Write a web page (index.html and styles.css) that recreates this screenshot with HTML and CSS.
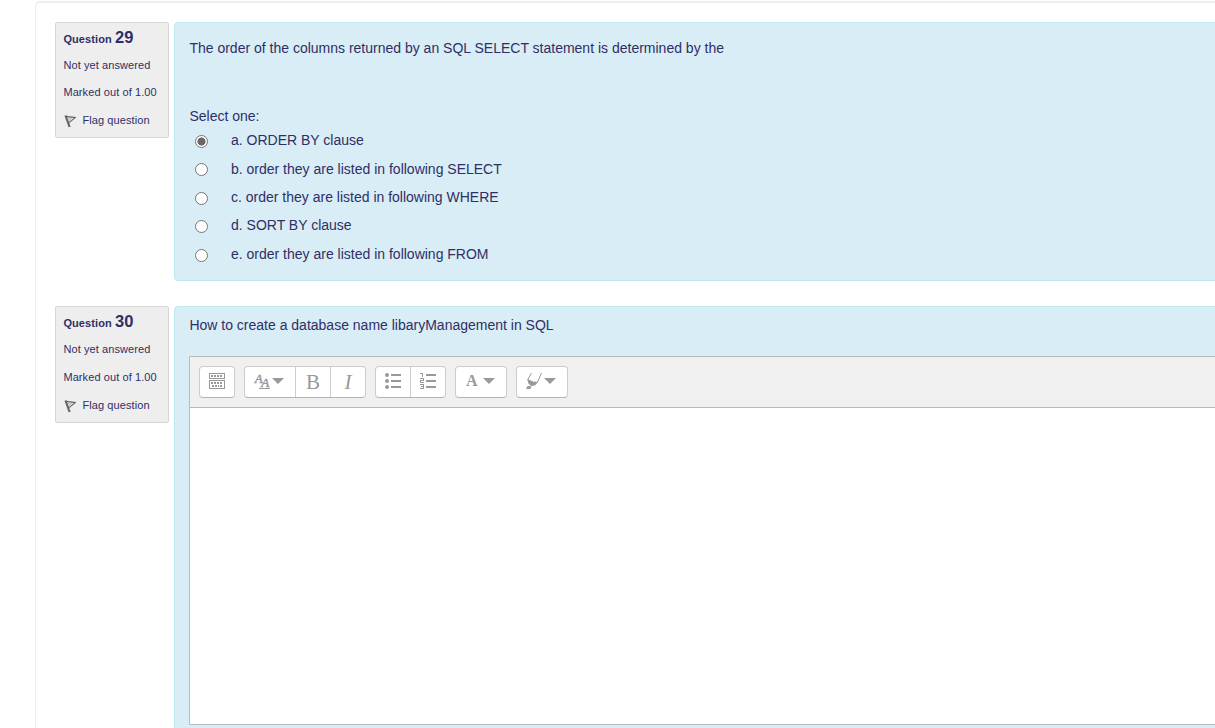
FILE: index.html
```html
<!DOCTYPE html>
<html lang="en">
<head>
<meta charset="utf-8">
<title>Quiz</title>
<link rel="stylesheet" href="styles.css">
</head>
<body>
<main class="region">
  <section class="question">
    <aside class="info">
      <h3 class="no">Question <span class="qno">29</span></h3>
      <div class="state">Not yet answered</div>
      <div class="grade">Marked out of 1.00</div>
      <div class="flag"><svg width="12" height="13" viewBox="0 0 12 13"><path d="M1.5 .5L5.6 12" stroke="#666" stroke-width="2.2" fill="none"/><path d="M2 1.4L11.2 2.6L5 7.6" stroke="#666" stroke-width="1.2" fill="none"/><path d="M4.4 2.8L7.6 3.4L5.4 5.4Z" stroke="#aaa" stroke-width=".7" fill="#eee"/></svg><span>Flag question</span></div>
    </aside>
    <div class="formulation choice">
      <div class="qtext">The order of the columns returned by an SQL SELECT statement is determined by the</div>
      <div class="prompt">Select one:</div>
      <div class="answers">
        <label class="answer"><span class="radio checked"></span><span>a. ORDER BY clause</span></label>
        <label class="answer"><span class="radio"></span><span>b. order they are listed in following SELECT</span></label>
        <label class="answer"><span class="radio"></span><span>c. order they are listed in following WHERE</span></label>
        <label class="answer"><span class="radio"></span><span>d. SORT BY clause</span></label>
        <label class="answer"><span class="radio"></span><span>e. order they are listed in following FROM</span></label>
      </div>
    </div>
  </section>
  <section class="question second">
    <aside class="info">
      <h3 class="no">Question <span class="qno">30</span></h3>
      <div class="state">Not yet answered</div>
      <div class="grade">Marked out of 1.00</div>
      <div class="flag"><svg width="12" height="13" viewBox="0 0 12 13"><path d="M1.5 .5L5.6 12" stroke="#666" stroke-width="2.2" fill="none"/><path d="M2 1.4L11.2 2.6L5 7.6" stroke="#666" stroke-width="1.2" fill="none"/><path d="M4.4 2.8L7.6 3.4L5.4 5.4Z" stroke="#aaa" stroke-width=".7" fill="#eee"/></svg><span>Flag question</span></div>
    </aside>
    <div class="formulation essay">
      <div class="qtext">How to create a database name libaryManagement in SQL</div>
      <div class="editor">
        <div class="toolbar">
          <div class="group"><button class="btn"><svg class="raise" width="16" height="16" viewBox="0 0 16 16" fill="none" stroke="#999" shape-rendering="crispEdges"><path d="M.5 .5h15v5h-15zM.5 7.5h15v8h-15z"/><path d="M2 3h12" stroke-width="2" stroke-dasharray="2 1"/><path d="M2 10h12M3 13h2M6 13h4M11 13h2" stroke-width="2" stroke-dasharray="2 1"/></svg></button></div>
          <div class="group"><button class="btn wide"><svg width="30" height="18" viewBox="0 0 30 18" fill="#999"><g stroke="#999" stroke-width=".5"><text x="0.8" y="10" class="serif slanted" font-size="13">A</text><text x="7.3" y="14" class="serif slanted" font-size="13">A</text></g><path d="M5 15h11v1H5zM18 5h12l-6 6z"/></svg></button><button class="btn"><span class="glyph">B</span></button><button class="btn"><span class="glyph slanted">I</span></button></div>
          <div class="group"><button class="btn"><svg class="raise" width="16" height="16" viewBox="0 0 16 16" fill="#999"><circle cx="2" cy="2" r="2"/><circle cx="2" cy="8" r="2"/><circle cx="2" cy="14" r="2"/><path d="M6 1h10v2H6zM6 7h10v2H6zM6 13h10v2H6z"/></svg></button><button class="btn"><svg class="raise" width="16" height="16" viewBox="0 0 16 16" fill="#999" shape-rendering="crispEdges"><path d="M6 1h10v2H6zM6 7h10v2H6zM6 13h10v2H6z"/><path d="M0 .5h2.5v3.5M0 5.5h3.5v2h-3v2H4M0 11.5h3.5v4H0M1 13.5h3" fill="none" stroke="#999"/></svg></button></div>
          <div class="group"><button class="btn wide"><svg width="30" height="18" viewBox="0 0 30 18" fill="#999"><text x="1" y="13" class="serif" font-weight="bold" font-size="16">A</text><path d="M18 5h12l-6 6z"/></svg></button></div>
          <div class="group"><button class="btn wide"><svg width="30" height="18" viewBox="0 0 30 18" fill="#999"><path d="M1.5 6L7 8.6L12 9L9 12.4L5 13L2.5 10.5ZM1.5 13L5.5 13.2L4.5 16H0Z"/><path d="M5.5 0L1.8 6.5L3.5 11M15.5 0L11.5 9" fill="none" stroke="#999"/><path d="M18 5h12l-6 6z"/></svg></button></div>
        </div>
        <div class="textarea"></div>
      </div>
    </div>
  </section>
</main>
</body>
</html>
```

FILE: styles.css
```css
* { box-sizing: border-box; }
html, body { height: 100%; overflow: hidden; }
body {
  margin: 0;
  padding: 1px 0 0 35px;
  background: #fff;
  color: #2f2f66;
  font: 14px/20px "Liberation Sans", Arial, sans-serif;
}
.region {
  width: 1240px;
  height: 727px;
  padding: 19px 0 0 19px;
  overflow: hidden;
  border: solid #ededed;
  border-width: 2px 0 0 1px;
  border-radius: 5px 0 0 0;
}
.question { display: flex; align-items: flex-start; gap: 5px; }
.second { margin-top: 25px; }
.info {
  width: 114px;
  height: 116px;
  padding: 4px 0 0 7.4px;
  border: 1px solid #d6d6d6;
  border-radius: 2px;
  background: #eee;
  font-size: 11px;
  line-height: 20px;
  letter-spacing: .09px;
  white-space: nowrap;
}
.no { margin: 0; height: 28px; font-size: 11px; line-height: 20px; }
.qno { font-size: 16.5px; }
.state, .grade { height: 27px; }
.flag { display: flex; align-items: flex-start; gap: 6px; padding-left: 1px; }
.flag svg { margin-top: 6px; }
.flag span { padding-top: 1px; }
.second .info { height: 117px; }
.second .state { height: 28px; }
.formulation {
  width: 1080px;
  padding: 15px 0 0 14.4px;
  border: 1px solid #bce8f1;
  border-radius: 4px;
  background: #d9edf6;
}
.choice { height: 259px; }
.prompt { margin-top: 48px; height: 22px; }
.answer { display: flex; height: 28.4px; padding-left: 5.6px; gap: 23px; line-height: 24px; }
.answer:nth-child(2) > :last-child { padding-top: 1px; }
.radio {
  width: 13px;
  height: 13px;
  margin-top: 7px;
  border: 1px solid #767676;
  border-radius: 50%;
  background: #fff;
}
.checked { background: radial-gradient(circle, #686868 0 3.8px, #fff 4.3px); }
.essay { height: 424px; padding: 8px 0 0 14px; }
.essay .qtext { padding-left: .4px; }
.editor { width: 1060px; margin-top: 21px; border: 1px solid #bbb; }
.toolbar {
  display: flex;
  gap: 9px;
  height: 51px;
  padding: 9px;
  border-bottom: 1px solid #bbb;
  background: #f0f0f0;
}
.group {
  display: flex;
  height: 32px;
  border: 1px solid #ccc;
  border-bottom-color: #b3b3b3;
  border-radius: 4px;
  background: #fff;
}
.btn {
  display: flex;
  align-items: center;
  justify-content: center;
  width: 34px;
  height: 30px;
  padding: 0;
  border: 0;
  background: none;
  color: #999;
}
.btn + .btn { width: 35px; border-left: 1px solid #ccc; }
.btn.wide { width: 50px; padding-right: 2px; }
.raise { margin-bottom: 2px; }
.glyph, .serif { font-family: "Liberation Serif", serif; }
.glyph { font-size: 21px; line-height: 28px; }
.slanted { font-style: italic; }
.textarea { height: 316px; background: #fff; }
```
